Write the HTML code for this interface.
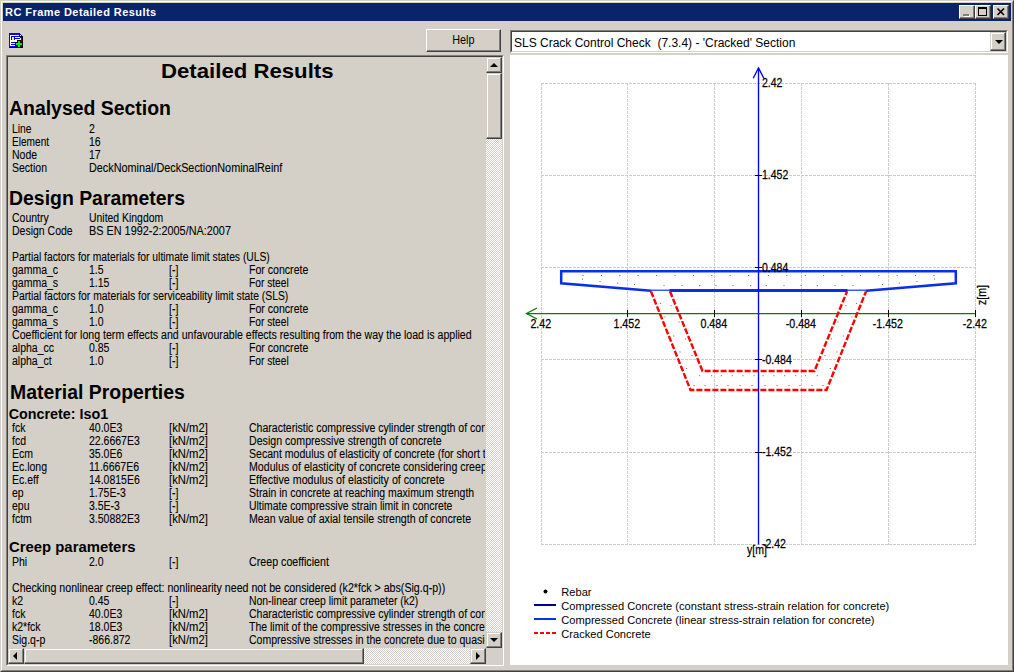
<!DOCTYPE html>
<html lang="en">
<head>
<meta charset="utf-8">
<title>RC Frame Detailed Results</title>
<style>
*{box-sizing:border-box;margin:0;padding:0}
html,body{width:1014px;height:672px;overflow:hidden;background:#d4d0c8}
body{position:relative;font-family:"Liberation Sans",sans-serif;font-size:11px;color:#000}
.abs{position:absolute}
/* window frame */
.win{position:absolute;left:0;top:0;width:1014px;height:672px;background:#d4d0c8;
  border-top:1px solid #d4d0c8;border-left:1px solid #d4d0c8;border-right:1px solid #404040;border-bottom:1px solid #404040}
.win2{position:absolute;left:1px;top:1px;width:1012px;height:670px;
  border-top:1px solid #fff;border-left:1px solid #fff;border-right:1px solid #808080;border-bottom:1px solid #808080}
.title{position:absolute;left:3px;top:3px;width:1008px;height:18px;background:#0a246a;color:#fff;
  font-weight:bold;font-size:11px;line-height:19px;padding-left:2px;white-space:nowrap;letter-spacing:0.44px}
.cbtn{position:absolute;top:5px;width:16px;height:14px;background:#d4d0c8;
  border-top:1px solid #fff;border-left:1px solid #fff;border-right:1px solid #404040;border-bottom:1px solid #404040;
  box-shadow:inset -1px -1px 0 #808080}
.btn{position:absolute;background:#d4d0c8;border-top:1px solid #fff;border-left:1px solid #fff;
  border-right:1px solid #404040;border-bottom:1px solid #404040;box-shadow:inset -1px -1px 0 #808080;
  text-align:center}
.sbtn{position:absolute;background:#d4d0c8;border-top:1px solid #d4d0c8;border-left:1px solid #d4d0c8;
  border-right:1px solid #404040;border-bottom:1px solid #404040;box-shadow:inset -1px -1px 0 #808080, inset 1px 1px 0 #fff}
.sunk{position:absolute;border-top:1px solid #808080;border-left:1px solid #808080;border-right:1px solid #fff;border-bottom:1px solid #fff}
.sunk>.in{position:absolute;left:0;top:0;right:0;bottom:0;border-top:1px solid #404040;border-left:1px solid #404040;
  border-right:1px solid #d4d0c8;border-bottom:1px solid #d4d0c8}
.track{background:repeating-conic-gradient(#fff 0 25%, #d4d0c8 0 50%) 0 0/2px 2px}
.text{position:absolute;left:8px;top:57px;width:477px;height:591px;overflow:hidden;background:#d4d0c8}
.text div{position:absolute;white-space:nowrap;transform-origin:0 0}
.s{font-size:12px;line-height:14px;height:14px;-webkit-text-stroke:0.1px #000}
.h1{font-weight:bold;font-size:21px;line-height:28px;height:28px;transform:scaleX(1.056)}
.h2{font-weight:bold;font-size:19.5px;line-height:28px;height:28px;transform:scaleX(0.996)}
.h3{font-weight:bold;font-size:14.3px;line-height:28px;height:28px;transform:scaleX(1.0)}
.chart{position:absolute;left:510px;top:55px}
.arrow{position:absolute;width:0;height:0}
</style>
</head>
<body>
<div class="win"></div><div class="win2"></div>
<div class="title">RC Frame Detailed Results</div>
<!-- caption buttons -->
<div class="cbtn" style="left:959px"><svg width="14" height="12" style="position:absolute;left:0;top:0"><rect x="4" y="9" width="6" height="2" fill="#fff"/><rect x="3" y="8" width="6" height="2" fill="#808080"/></svg></div>
<div class="cbtn" style="left:975px"><svg width="14" height="12" style="position:absolute;left:0;top:0"><rect x="2.5" y="1.5" width="8" height="8" fill="none" stroke="#000"/><rect x="2" y="1" width="9" height="2" fill="#000"/></svg></div>
<div class="cbtn" style="left:993px"><svg width="14" height="12" style="position:absolute;left:0;top:0"><path d="M3.5 2.5 L10 9 M10 2.5 L3.5 9" stroke="#000" stroke-width="1.6" fill="none"/></svg></div>

<!-- toolbar icon -->
<svg class="abs" style="left:9px;top:33px" width="14" height="15" viewBox="0 0 14 15" shape-rendering="crispEdges"><rect x="0" y="0" width="11" height="1" fill="#0000ff"/><rect x="0" y="1" width="12" height="1" fill="#0000ff"/><rect x="0" y="2" width="1" height="1" fill="#0000ff"/><rect x="1" y="2" width="9" height="1" fill="#ffffff"/><rect x="10" y="2" width="1" height="1" fill="#0000ff"/><rect x="11" y="2" width="1" height="1" fill="#ffffff"/><rect x="12" y="2" width="1" height="1" fill="#0000ff"/><rect x="0" y="3" width="1" height="1" fill="#0000ff"/><rect x="1" y="3" width="1" height="1" fill="#ffffff"/><rect x="2" y="3" width="8" height="1" fill="#0000ff"/><rect x="10" y="3" width="4" height="1" fill="#000000"/><rect x="0" y="4" width="1" height="1" fill="#0000ff"/><rect x="1" y="4" width="1" height="1" fill="#ffffff"/><rect x="2" y="4" width="1" height="1" fill="#0000ff"/><rect x="3" y="4" width="2" height="1" fill="#ffff00"/><rect x="5" y="4" width="1" height="1" fill="#0000ff"/><rect x="6" y="4" width="5" height="1" fill="#ffffff"/><rect x="11" y="4" width="2" height="1" fill="#0000ff"/><rect x="13" y="4" width="1" height="1" fill="#000000"/><rect x="0" y="5" width="1" height="1" fill="#0000ff"/><rect x="1" y="5" width="1" height="1" fill="#ffffff"/><rect x="2" y="5" width="1" height="1" fill="#0000ff"/><rect x="3" y="5" width="2" height="1" fill="#ffff00"/><rect x="5" y="5" width="6" height="1" fill="#0000ff"/><rect x="11" y="5" width="1" height="1" fill="#ffffff"/><rect x="12" y="5" width="1" height="1" fill="#0000ff"/><rect x="13" y="5" width="1" height="1" fill="#000000"/><rect x="0" y="6" width="1" height="1" fill="#0000ff"/><rect x="1" y="6" width="1" height="1" fill="#ffffff"/><rect x="2" y="6" width="1" height="1" fill="#0000ff"/><rect x="3" y="6" width="2" height="1" fill="#ffff00"/><rect x="5" y="6" width="1" height="1" fill="#0000ff"/><rect x="6" y="6" width="6" height="1" fill="#ffffff"/><rect x="12" y="6" width="1" height="1" fill="#0000ff"/><rect x="13" y="6" width="1" height="1" fill="#000000"/><rect x="0" y="7" width="1" height="1" fill="#0000ff"/><rect x="1" y="7" width="7" height="1" fill="#ffffff"/><rect x="8" y="7" width="4" height="1" fill="#000000"/><rect x="12" y="7" width="1" height="1" fill="#0000ff"/><rect x="13" y="7" width="1" height="1" fill="#000000"/><rect x="0" y="8" width="1" height="1" fill="#0000ff"/><rect x="1" y="8" width="7" height="1" fill="#ffffff"/><rect x="8" y="8" width="1" height="1" fill="#000000"/><rect x="9" y="8" width="2" height="1" fill="#00f000"/><rect x="11" y="8" width="1" height="1" fill="#000000"/><rect x="12" y="8" width="1" height="1" fill="#0000ff"/><rect x="13" y="8" width="1" height="1" fill="#000000"/><rect x="0" y="9" width="1" height="1" fill="#0000ff"/><rect x="1" y="9" width="1" height="1" fill="#ffffff"/><rect x="2" y="9" width="4" height="1" fill="#0000ff"/><rect x="6" y="9" width="3" height="1" fill="#000000"/><rect x="9" y="9" width="2" height="1" fill="#00f000"/><rect x="11" y="9" width="3" height="1" fill="#000000"/><rect x="0" y="10" width="1" height="1" fill="#0000ff"/><rect x="1" y="10" width="5" height="1" fill="#ffffff"/><rect x="6" y="10" width="1" height="1" fill="#000000"/><rect x="7" y="10" width="6" height="1" fill="#00f000"/><rect x="13" y="10" width="1" height="1" fill="#000000"/><rect x="0" y="11" width="1" height="1" fill="#0000ff"/><rect x="1" y="11" width="1" height="1" fill="#ffffff"/><rect x="2" y="11" width="4" height="1" fill="#0000ff"/><rect x="6" y="11" width="1" height="1" fill="#000000"/><rect x="7" y="11" width="6" height="1" fill="#00f000"/><rect x="13" y="11" width="1" height="1" fill="#000000"/><rect x="0" y="12" width="1" height="1" fill="#0000ff"/><rect x="1" y="12" width="5" height="1" fill="#ffffff"/><rect x="6" y="12" width="3" height="1" fill="#000000"/><rect x="9" y="12" width="2" height="1" fill="#00f000"/><rect x="11" y="12" width="3" height="1" fill="#000000"/><rect x="0" y="13" width="8" height="1" fill="#0000ff"/><rect x="8" y="13" width="1" height="1" fill="#000000"/><rect x="9" y="13" width="2" height="1" fill="#00f000"/><rect x="11" y="13" width="1" height="1" fill="#000000"/><rect x="12" y="13" width="1" height="1" fill="#0000ff"/><rect x="13" y="13" width="1" height="1" fill="#000000"/><rect x="0" y="14" width="1" height="1" fill="#0000ff"/><rect x="1" y="14" width="13" height="1" fill="#000000"/></svg>

<!-- Help button -->
<div class="btn" style="left:426px;top:29px;width:75px;height:23px;font-size:12px;line-height:21px"><span style="display:inline-block;transform:scaleX(.9)">Help</span></div>

<!-- left text panel -->
<div class="sunk" style="left:6px;top:55px;width:498px;height:611px"><div class="in"></div></div>
<div class="text">
<div class="s" style="left:3.6999999999999993px;top:64.5px;transform:scaleX(0.8557)">Line</div>
<div class="s" style="left:81px;top:64.5px;transform:scaleX(0.875)">2</div>
<div class="s" style="left:3.6999999999999993px;top:77.5px;transform:scaleX(0.8427)">Element</div>
<div class="s" style="left:81px;top:77.5px;transform:scaleX(0.875)">16</div>
<div class="s" style="left:3.6999999999999993px;top:90.5px;transform:scaleX(0.875)">Node</div>
<div class="s" style="left:81px;top:90.5px;transform:scaleX(0.875)">17</div>
<div class="s" style="left:3.6999999999999993px;top:103.5px;transform:scaleX(0.875)">Section</div>
<div class="s" style="left:81px;top:103.5px;transform:scaleX(0.9031)">DeckNominal/DeckSectionNominalReinf</div>
<div class="s" style="left:3.6999999999999993px;top:153.5px;transform:scaleX(0.875)">Country</div>
<div class="s" style="left:81px;top:153.5px;transform:scaleX(0.8692)">United Kingdom</div>
<div class="s" style="left:3.6999999999999993px;top:166.5px;transform:scaleX(0.875)">Design Code</div>
<div class="s" style="left:81px;top:166.5px;transform:scaleX(0.9054)">BS EN 1992-2:2005/NA:2007</div>
<div class="s" style="left:3.6999999999999993px;top:192.5px;transform:scaleX(0.8591)">Partial factors for materials for ultimate limit states (ULS)</div>
<div class="s" style="left:3.6999999999999993px;top:205.5px;transform:scaleX(0.875)">gamma_c</div>
<div class="s" style="left:81px;top:205.5px;transform:scaleX(0.875)">1.5</div>
<div class="s" style="left:161px;top:205.5px;transform:scaleX(0.875)">[-]</div>
<div class="s" style="left:241px;top:205.5px;transform:scaleX(0.8808)">For concrete</div>
<div class="s" style="left:3.6999999999999993px;top:218.5px;transform:scaleX(0.875)">gamma_s</div>
<div class="s" style="left:81px;top:218.5px;transform:scaleX(0.875)">1.15</div>
<div class="s" style="left:161px;top:218.5px;transform:scaleX(0.875)">[-]</div>
<div class="s" style="left:241px;top:218.5px;transform:scaleX(0.8506)">For steel</div>
<div class="s" style="left:3.6999999999999993px;top:231.5px;transform:scaleX(0.8632)">Partial factors for materials for serviceability limit state (SLS)</div>
<div class="s" style="left:3.6999999999999993px;top:244.5px;transform:scaleX(0.875)">gamma_c</div>
<div class="s" style="left:81px;top:244.5px;transform:scaleX(0.875)">1.0</div>
<div class="s" style="left:161px;top:244.5px;transform:scaleX(0.875)">[-]</div>
<div class="s" style="left:241px;top:244.5px;transform:scaleX(0.8808)">For concrete</div>
<div class="s" style="left:3.6999999999999993px;top:257.5px;transform:scaleX(0.875)">gamma_s</div>
<div class="s" style="left:81px;top:257.5px;transform:scaleX(0.875)">1.0</div>
<div class="s" style="left:161px;top:257.5px;transform:scaleX(0.875)">[-]</div>
<div class="s" style="left:241px;top:257.5px;transform:scaleX(0.8506)">For steel</div>
<div class="s" style="left:3.6999999999999993px;top:270.5px;transform:scaleX(0.8823)">Coefficient for long term effects and unfavourable effects resulting from the way the load is applied</div>
<div class="s" style="left:3.6999999999999993px;top:283.5px;transform:scaleX(0.875)">alpha_cc</div>
<div class="s" style="left:81px;top:283.5px;transform:scaleX(0.875)">0.85</div>
<div class="s" style="left:161px;top:283.5px;transform:scaleX(0.875)">[-]</div>
<div class="s" style="left:241px;top:283.5px;transform:scaleX(0.8808)">For concrete</div>
<div class="s" style="left:3.6999999999999993px;top:296.5px;transform:scaleX(0.875)">alpha_ct</div>
<div class="s" style="left:81px;top:296.5px;transform:scaleX(0.875)">1.0</div>
<div class="s" style="left:161px;top:296.5px;transform:scaleX(0.875)">[-]</div>
<div class="s" style="left:241px;top:296.5px;transform:scaleX(0.8506)">For steel</div>
<div class="s" style="left:3.6999999999999993px;top:363.5px;transform:scaleX(0.875)">fck</div>
<div class="s" style="left:81px;top:363.5px;transform:scaleX(0.875)">40.0E3</div>
<div class="s" style="left:161px;top:363.5px;transform:scaleX(0.9376)">[kN/m2]</div>
<div class="s" style="left:241px;top:363.5px;transform:scaleX(0.8768)">Characteristic compressive cylinder strength of concrete</div>
<div class="s" style="left:3.6999999999999993px;top:376.5px;transform:scaleX(0.875)">fcd</div>
<div class="s" style="left:81px;top:376.5px;transform:scaleX(0.875)">22.6667E3</div>
<div class="s" style="left:161px;top:376.5px;transform:scaleX(0.9376)">[kN/m2]</div>
<div class="s" style="left:241px;top:376.5px;transform:scaleX(0.8859)">Design compressive strength of concrete</div>
<div class="s" style="left:3.6999999999999993px;top:389.5px;transform:scaleX(0.875)">Ecm</div>
<div class="s" style="left:81px;top:389.5px;transform:scaleX(0.875)">35.0E6</div>
<div class="s" style="left:161px;top:389.5px;transform:scaleX(0.9376)">[kN/m2]</div>
<div class="s" style="left:241px;top:389.5px;transform:scaleX(0.8787)">Secant modulus of elasticity of concrete (for short term loading)</div>
<div class="s" style="left:3.6999999999999993px;top:402.5px;transform:scaleX(0.875)">Ec.long</div>
<div class="s" style="left:81px;top:402.5px;transform:scaleX(0.875)">11.6667E6</div>
<div class="s" style="left:161px;top:402.5px;transform:scaleX(0.9376)">[kN/m2]</div>
<div class="s" style="left:241px;top:402.5px;transform:scaleX(0.8848)">Modulus of elasticity of concrete considering creep</div>
<div class="s" style="left:3.6999999999999993px;top:415.5px;transform:scaleX(0.875)">Ec.eff</div>
<div class="s" style="left:81px;top:415.5px;transform:scaleX(0.875)">14.0815E6</div>
<div class="s" style="left:161px;top:415.5px;transform:scaleX(0.9376)">[kN/m2]</div>
<div class="s" style="left:241px;top:415.5px;transform:scaleX(0.8901)">Effective modulus of elasticity of concrete</div>
<div class="s" style="left:3.6999999999999993px;top:428.5px;transform:scaleX(0.875)">ep</div>
<div class="s" style="left:81px;top:428.5px;transform:scaleX(0.875)">1.75E-3</div>
<div class="s" style="left:161px;top:428.5px;transform:scaleX(0.875)">[-]</div>
<div class="s" style="left:241px;top:428.5px;transform:scaleX(0.8721)">Strain in concrete at reaching maximum strength</div>
<div class="s" style="left:3.6999999999999993px;top:441.5px;transform:scaleX(0.875)">epu</div>
<div class="s" style="left:81px;top:441.5px;transform:scaleX(0.875)">3.5E-3</div>
<div class="s" style="left:161px;top:441.5px;transform:scaleX(0.875)">[-]</div>
<div class="s" style="left:241px;top:441.5px;transform:scaleX(0.869)">Ultimate compressive strain limit in concrete</div>
<div class="s" style="left:3.6999999999999993px;top:454.5px;transform:scaleX(0.875)">fctm</div>
<div class="s" style="left:81px;top:454.5px;transform:scaleX(0.875)">3.50882E3</div>
<div class="s" style="left:161px;top:454.5px;transform:scaleX(0.9376)">[kN/m2]</div>
<div class="s" style="left:241px;top:454.5px;transform:scaleX(0.8856)">Mean value of axial tensile strength of concrete</div>
<div class="s" style="left:3.6999999999999993px;top:497.5px;transform:scaleX(0.875)">Phi</div>
<div class="s" style="left:81px;top:497.5px;transform:scaleX(0.875)">2.0</div>
<div class="s" style="left:161px;top:497.5px;transform:scaleX(0.875)">[-]</div>
<div class="s" style="left:241px;top:497.5px;transform:scaleX(0.8897)">Creep coefficient</div>
<div class="s" style="left:3.6999999999999993px;top:523.5px;transform:scaleX(0.887)">Checking nonlinear creep effect: nonlinearity need not be considered (k2*fck &gt; abs(Sig.q-p))</div>
<div class="s" style="left:3.6999999999999993px;top:536.5px;transform:scaleX(0.875)">k2</div>
<div class="s" style="left:81px;top:536.5px;transform:scaleX(0.875)">0.45</div>
<div class="s" style="left:161px;top:536.5px;transform:scaleX(0.875)">[-]</div>
<div class="s" style="left:241px;top:536.5px;transform:scaleX(0.866)">Non-linear creep limit parameter (k2)</div>
<div class="s" style="left:3.6999999999999993px;top:549.5px;transform:scaleX(0.875)">fck</div>
<div class="s" style="left:81px;top:549.5px;transform:scaleX(0.875)">40.0E3</div>
<div class="s" style="left:161px;top:549.5px;transform:scaleX(0.9376)">[kN/m2]</div>
<div class="s" style="left:241px;top:549.5px;transform:scaleX(0.8768)">Characteristic compressive cylinder strength of concrete</div>
<div class="s" style="left:3.6999999999999993px;top:562.5px;transform:scaleX(0.875)">k2*fck</div>
<div class="s" style="left:81px;top:562.5px;transform:scaleX(0.875)">18.0E3</div>
<div class="s" style="left:161px;top:562.5px;transform:scaleX(0.9376)">[kN/m2]</div>
<div class="s" style="left:241px;top:562.5px;transform:scaleX(0.8756)">The limit of the compressive stresses in the concrete</div>
<div class="s" style="left:3.6999999999999993px;top:575.5px;transform:scaleX(0.875)">Sig.q-p</div>
<div class="s" style="left:81px;top:575.5px;transform:scaleX(0.875)">-866.872</div>
<div class="s" style="left:161px;top:575.5px;transform:scaleX(0.9376)">[kN/m2]</div>
<div class="s" style="left:241px;top:575.5px;transform:scaleX(0.8765)">Compressive stresses in the concrete due to quasi-permanent load</div>
<div class="h1" style="left:153px;top:0px">Detailed Results</div>
<div class="h2" style="left:0.5px;top:37px">Analysed Section</div>
<div class="h2" style="left:1px;top:127px">Design Parameters</div>
<div class="h2" style="left:1.5px;top:321px">Material Properties</div>
<div class="h3" style="left:0.8000000000000007px;top:343px">Concrete: Iso1</div>
<div class="h3" style="left:0.8000000000000007px;top:475.5px;transform:scaleX(1.04)">Creep parameters</div>
</div>
<!-- vertical scrollbar -->
<div class="abs track" style="left:486px;top:57px;width:16px;height:591px"></div>
<div class="sbtn" style="left:486px;top:57px;width:16px;height:16px"><i class="arrow" style="left:3px;top:5px;border-left:4px solid transparent;border-right:4px solid transparent;border-bottom:4px solid #000"></i></div>
<div class="sbtn" style="left:486px;top:73px;width:16px;height:66px"></div>
<div class="sbtn" style="left:486px;top:632px;width:16px;height:16px"><i class="arrow" style="left:3px;top:5px;border-left:4px solid transparent;border-right:4px solid transparent;border-top:4px solid #000"></i></div>
<!-- horizontal scrollbar -->
<div class="abs track" style="left:8px;top:648px;width:478px;height:16px"></div>
<div class="sbtn" style="left:8px;top:648px;width:16px;height:16px"><i class="arrow" style="left:4px;top:3px;border-top:4px solid transparent;border-bottom:4px solid transparent;border-right:4px solid #000"></i></div>
<div class="sbtn" style="left:24px;top:648px;width:340px;height:16px"></div>
<div class="sbtn" style="left:470px;top:648px;width:16px;height:16px"><i class="arrow" style="left:5px;top:3px;border-top:4px solid transparent;border-bottom:4px solid transparent;border-left:4px solid #000"></i></div>
<div class="abs" style="left:486px;top:648px;width:16px;height:16px;background:#d4d0c8"></div>

<!-- combobox -->
<div class="sunk" style="left:510px;top:30px;width:498px;height:23px;background:#fff"><div class="in"></div></div>
<div class="abs" style="left:514px;top:33px;height:19px;line-height:21px;font-size:12px;white-space:pre">SLS Crack Control Check  (7.3.4) - 'Cracked' Section</div>
<div class="sbtn" style="left:990px;top:32px;width:16px;height:19px"><i class="arrow" style="left:4px;top:7px;border-left:4px solid transparent;border-right:4px solid transparent;border-top:4px solid #000"></i></div>

<!-- chart -->
<svg class="chart" width="498" height="610" viewBox="510 55 498 610">
<rect x="510" y="55" width="498" height="610" fill="#fff"/>
<g stroke="#cdcdc8" stroke-width="1" stroke-dasharray="3 1" fill="none" shape-rendering="crispEdges">
<line x1="541.5" y1="83" x2="541.5" y2="545"/>
<line x1="627.5" y1="83" x2="627.5" y2="545"/>
<line x1="714.5" y1="83" x2="714.5" y2="545"/>
<line x1="801.5" y1="83" x2="801.5" y2="545"/>
<line x1="888.5" y1="83" x2="888.5" y2="545"/>
<line x1="975.5" y1="83" x2="975.5" y2="545"/>
<line x1="541" y1="83.5" x2="976" y2="83.5"/>
<line x1="541" y1="175.5" x2="976" y2="175.5"/>
<line x1="541" y1="267.5" x2="976" y2="267.5"/>
<line x1="541" y1="359.5" x2="976" y2="359.5"/>
<line x1="541" y1="452.5" x2="976" y2="452.5"/>
<line x1="541" y1="544.5" x2="976" y2="544.5"/>
</g>
<g fill="#5c6460">
<rect x="582.5" y="275.0" width="1" height="1"/>
<rect x="933.5" y="275.0" width="1" height="1"/>
<rect x="600.9" y="275.0" width="1" height="1"/>
<rect x="915.1" y="275.0" width="1" height="1"/>
<rect x="619.3" y="275.0" width="1" height="1"/>
<rect x="896.7" y="275.0" width="1" height="1"/>
<rect x="637.7" y="275.0" width="1" height="1"/>
<rect x="878.3" y="275.0" width="1" height="1"/>
<rect x="656.1" y="275.0" width="1" height="1"/>
<rect x="859.9" y="275.0" width="1" height="1"/>
<rect x="674.5" y="275.0" width="1" height="1"/>
<rect x="841.5" y="275.0" width="1" height="1"/>
<rect x="692.9" y="275.0" width="1" height="1"/>
<rect x="823.1" y="275.0" width="1" height="1"/>
<rect x="711.3" y="275.0" width="1" height="1"/>
<rect x="804.7" y="275.0" width="1" height="1"/>
<rect x="729.7" y="275.0" width="1" height="1"/>
<rect x="786.3" y="275.0" width="1" height="1"/>
<rect x="748.1" y="275.0" width="1" height="1"/>
<rect x="767.9" y="275.0" width="1" height="1"/>
<rect x="582.0" y="278.5" width="1" height="1"/>
<rect x="934.0" y="278.5" width="1" height="1"/>
<rect x="599.5" y="281.0" width="1" height="1"/>
<rect x="916.5" y="281.0" width="1" height="1"/>
<rect x="617.2" y="282.7" width="1" height="1"/>
<rect x="898.8" y="282.7" width="1" height="1"/>
<rect x="634.1" y="284.0" width="1" height="1"/>
<rect x="881.9" y="284.0" width="1" height="1"/>
<rect x="663.5" y="285.1" width="1" height="1"/>
<rect x="852.5" y="285.1" width="1" height="1"/>
<rect x="681.5" y="285.1" width="1" height="1"/>
<rect x="834.5" y="285.1" width="1" height="1"/>
<rect x="699.2" y="285.1" width="1" height="1"/>
<rect x="816.8" y="285.1" width="1" height="1"/>
<rect x="715.5" y="285.1" width="1" height="1"/>
<rect x="800.5" y="285.1" width="1" height="1"/>
<rect x="732.5" y="285.1" width="1" height="1"/>
<rect x="783.5" y="285.1" width="1" height="1"/>
<rect x="750.2" y="285.1" width="1" height="1"/>
<rect x="765.8" y="285.1" width="1" height="1"/>
<rect x="660.1" y="302.9" width="1" height="1"/>
<rect x="855.9" y="302.9" width="1" height="1"/>
<rect x="670.5" y="305.1" width="1" height="1"/>
<rect x="845.5" y="305.1" width="1" height="1"/>
<rect x="664.5" y="316.5" width="1" height="1"/>
<rect x="851.5" y="316.5" width="1" height="1"/>
<rect x="678.5" y="321.5" width="1" height="1"/>
<rect x="837.5" y="321.5" width="1" height="1"/>
<rect x="673.2" y="335.5" width="1" height="1"/>
<rect x="842.8" y="335.5" width="1" height="1"/>
<rect x="685.1" y="338.5" width="1" height="1"/>
<rect x="830.9" y="338.5" width="1" height="1"/>
<rect x="679.5" y="351.5" width="1" height="1"/>
<rect x="836.5" y="351.5" width="1" height="1"/>
<rect x="691.5" y="355.0" width="1" height="1"/>
<rect x="824.5" y="355.0" width="1" height="1"/>
<rect x="686.2" y="368.0" width="1" height="1"/>
<rect x="829.8" y="368.0" width="1" height="1"/>
<rect x="699.2" y="375.2" width="1" height="1"/>
<rect x="816.8" y="375.2" width="1" height="1"/>
<rect x="711.1" y="375.2" width="1" height="1"/>
<rect x="804.9" y="375.2" width="1" height="1"/>
<rect x="720.9" y="375.2" width="1" height="1"/>
<rect x="795.1" y="375.2" width="1" height="1"/>
<rect x="731.8" y="375.2" width="1" height="1"/>
<rect x="784.2" y="375.2" width="1" height="1"/>
<rect x="742.5" y="375.2" width="1" height="1"/>
<rect x="773.5" y="375.2" width="1" height="1"/>
<rect x="753.5" y="375.2" width="1" height="1"/>
<rect x="762.5" y="375.2" width="1" height="1"/>
<rect x="693.5" y="385.0" width="1" height="1"/>
<rect x="822.5" y="385.0" width="1" height="1"/>
<rect x="704.5" y="385.0" width="1" height="1"/>
<rect x="811.5" y="385.0" width="1" height="1"/>
<rect x="716.5" y="385.0" width="1" height="1"/>
<rect x="799.5" y="385.0" width="1" height="1"/>
<rect x="727.5" y="385.0" width="1" height="1"/>
<rect x="788.5" y="385.0" width="1" height="1"/>
<rect x="739.5" y="385.0" width="1" height="1"/>
<rect x="776.5" y="385.0" width="1" height="1"/>
<rect x="751.5" y="385.0" width="1" height="1"/>
<rect x="764.5" y="385.0" width="1" height="1"/>
</g>
<g fill="none" stroke="#ff0000" stroke-width="2.4" stroke-dasharray="6 2">
<polyline points="651,291.5 690.5,390 826.5,390 866,291.5"/>
<polyline points="670,291.5 702.5,371 814.5,371 847,291.5"/>
</g>
<g fill="none" stroke="#0830e8" stroke-width="2.5" stroke-linejoin="miter">
<polyline points="651,290.8 561.2,283.3 561.2,271.2 955.8,271.2 955.8,283.3 866,290.8"/>
<line x1="651" y1="290.3" x2="866" y2="290.3" stroke-width="1.6" stroke="#3a5cff"/>
<line x1="669.5" y1="290.5" x2="847.5" y2="290.5" stroke-width="3"/>
</g>
<g fill="none" stroke="#008000" stroke-width="1.25">
<line x1="526" y1="313.5" x2="975.5" y2="313.5"/>
<polyline points="537,308 526.5,313.5 537,319"/>
</g>
<g fill="none" stroke="#0000ff" stroke-width="1.35">
<line x1="758.5" y1="68" x2="758.5" y2="544.5"/>
<polyline points="753.2,78.2 758.5,68 763.8,78.2"/>
</g>
<g stroke="#000" stroke-width="1" shape-rendering="crispEdges">
<line x1="627.5" y1="310" x2="627.5" y2="317"/>
<line x1="714.5" y1="310" x2="714.5" y2="317"/>
<line x1="801.5" y1="310" x2="801.5" y2="317"/>
<line x1="888.5" y1="310" x2="888.5" y2="317"/>
<line x1="975.5" y1="310" x2="975.5" y2="317"/>
<line x1="755" y1="175.5" x2="762" y2="175.5"/>
<line x1="755" y1="267.5" x2="762" y2="267.5"/>
<line x1="755" y1="359.5" x2="762" y2="359.5"/>
<line x1="755" y1="452.5" x2="762" y2="452.5"/>
</g>
<g font-family="'Liberation Sans', sans-serif" font-size="12px" fill="#000" stroke="#000" stroke-width="0.25">
<text transform="translate(540.8,328) scale(0.89,1)" text-anchor="middle">2.42</text>
<text transform="translate(626.8,328) scale(0.89,1)" text-anchor="middle">1.452</text>
<text transform="translate(713.8,328) scale(0.89,1)" text-anchor="middle">0.484</text>
<text transform="translate(800.8,328) scale(0.89,1)" text-anchor="middle">-0.484</text>
<text transform="translate(887.8,328) scale(0.89,1)" text-anchor="middle">-1.452</text>
<text transform="translate(974.8,328) scale(0.89,1)" text-anchor="middle">-2.42</text>
<text transform="translate(762,87.3) scale(0.875,1)">2.42</text>
<text transform="translate(762,179.3) scale(0.875,1)">1.452</text>
<text transform="translate(762,272.1) scale(0.875,1)">0.484</text>
<text transform="translate(762,364.1) scale(0.875,1)">-0.484</text>
<text transform="translate(762,456.3) scale(0.875,1)">-1.452</text>
<text transform="translate(762,548.3) scale(0.875,1)">-2.42</text>
<text transform="translate(747,554) scale(0.875,1)">y[m]</text>
<text transform="translate(986,305) rotate(-90) scale(0.875,1)">z[m]</text>
</g>
<g font-family="'Liberation Sans', sans-serif" font-size="11.1px" fill="#000">
<circle cx="545.5" cy="591.6" r="2" fill="#000"/>
<text x="561.3" y="595.6">Rebar</text>
<text x="561.3" y="609.6">Compressed Concrete (constant stress-strain relation for concrete)</text>
<text x="561.3" y="623.6">Compressed Concrete (linear stress-strain relation for concrete)</text>
<text x="561.3" y="637.6">Cracked Concrete</text>
</g>
<line x1="534" y1="605" x2="556" y2="605" stroke="#00008b" stroke-width="2"/>
<line x1="534" y1="619" x2="556" y2="619" stroke="#0a32f0" stroke-width="2"/>
<line x1="534" y1="633" x2="556" y2="633" stroke="#ff0000" stroke-width="2" stroke-dasharray="4 2"/>
</svg>
</body>
</html>
